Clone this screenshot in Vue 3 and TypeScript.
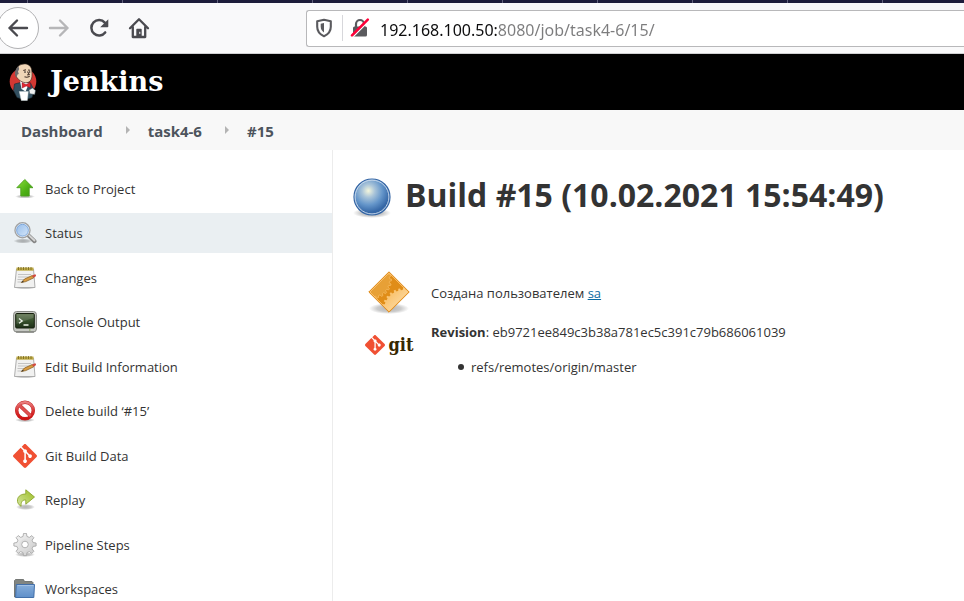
<script setup lang="ts">
import { ref } from 'vue'

type IconName = 'up' | 'search' | 'notepad' | 'terminal' | 'stop' | 'git' | 'redo' | 'gear' | 'folder'

interface Task {
  label: string
  icon: IconName
  active?: boolean
}

const address = ref('192.168.100.50:8080/job/task4-6/15/')

const crumbs: string[] = ['Dashboard', 'task4-6', '#15']

const tasks: Task[] = [
  { label: 'Back to Project', icon: 'up' },
  { label: 'Status', icon: 'search', active: true },
  { label: 'Changes', icon: 'notepad' },
  { label: 'Console Output', icon: 'terminal' },
  { label: 'Edit Build Information', icon: 'notepad' },
  { label: 'Delete build ‘#15’', icon: 'stop' },
  { label: 'Git Build Data', icon: 'git' },
  { label: 'Replay', icon: 'redo' },
  { label: 'Pipeline Steps', icon: 'gear' },
  { label: 'Workspaces', icon: 'folder' },
]

/* Outline of a toothed wheel */
function gearPath(cx: number, cy: number, outer: number, inner: number, teeth: number): string {
  const step = (Math.PI * 2) / teeth
  const points: string[] = []
  for (let i = 0; i < teeth; i++) {
    const a = i * step - Math.PI / 2
    const corners: [number, number][] = [
      [-0.3, inner],
      [-0.17, outer],
      [0.17, outer],
      [0.3, inner],
    ]
    for (const [offset, r] of corners) {
      const t = a + offset * step
      points.push(`${(cx + r * Math.cos(t)).toFixed(2)} ${(cy + r * Math.sin(t)).toFixed(2)}`)
    }
  }
  return `M${points.join('L')}Z`
}

const wheel = gearPath(12, 11.5, 11.2, 8.3, 8)
const smallWheel = gearPath(6, 10, 18.5, 16.5, 24)
const largeWheel = gearPath(37, 40, 22, 20, 28)

const gitMark =
  'M23.546 10.93L13.067.452c-.604-.603-1.582-.603-2.188 0L8.708 2.627l2.76 2.76c.645-.215 1.379-.07 1.889.441.516.515.658 1.258.438 1.9l2.658 2.66c.645-.223 1.387-.078 1.9.435.721.72.721 1.884 0 2.604-.719.719-1.881.719-2.6 0-.539-.541-.674-1.337-.404-1.996L12.86 8.955v6.525c.176.086.342.203.488.348.713.721.713 1.883 0 2.6-.719.721-1.889.721-2.609 0-.719-.719-.719-1.879 0-2.598.182-.18.387-.316.605-.406V8.835c-.217-.091-.424-.222-.6-.401-.545-.545-.676-1.342-.396-2.009L7.636 3.7.45 10.881c-.6.605-.6 1.584 0 2.189l10.48 10.477c.604.604 1.582.604 2.186 0l10.43-10.43c.605-.603.605-1.582 0-2.187'
</script>

<template>
  <div class="window">
    <div class="tabstrip"></div>

    <div class="toolbar">
      <div class="nav">
        <button class="nav-button back" type="button" aria-label="Back">
          <svg width="22" height="20" viewBox="0 0 22 20" fill="none" stroke="#4a4a4f" stroke-width="2.4" stroke-linecap="round" stroke-linejoin="round">
            <path d="M20 10H2.5M10 2.5L2.5 10l7.5 7.5" />
          </svg>
        </button>
        <button class="nav-button" type="button" aria-label="Forward" disabled>
          <svg width="22" height="20" viewBox="0 0 22 20" fill="none" stroke="#b6b6b8" stroke-width="2.4" stroke-linecap="round" stroke-linejoin="round">
            <path d="M2 10h17.5M12 2.5l7.500 7.500-7.500 7.500" />
          </svg>
        </button>
        <button class="nav-button" type="button" aria-label="Reload">
          <svg width="20" height="20" viewBox="0 0 20 20" fill="none">
            <path d="M15.800 4.600A7.700 7.700 0 1 0 16.200 14.400" stroke="#4a4a4f" stroke-width="2.500" stroke-linecap="round" />
            <path d="M19.300 1.200v7.300a.8.8 0 0 1-.8.8h-7.300z" fill="#4a4a4f" />
          </svg>
        </button>
        <button class="nav-button" type="button" aria-label="Home">
          <svg width="22" height="22" viewBox="0 0 22 22" fill="none" stroke="#4a4a4f" stroke-width="2.300" stroke-linecap="round" stroke-linejoin="round">
            <path d="M2 11.300L11 2.200l9 9.100M4.800 10v10h12.400V10" />
            <path d="M9 19.500v-7h4v7" fill="#4a4a4f" stroke-width="1.400" />
            <path d="M11.800 15.200v1.300" stroke="#f9f9fa" stroke-width="1" />
          </svg>
        </button>
      </div>

      <div class="urlbar">
        <svg class="shield" width="18" height="20" viewBox="0 0 18 20" fill="none">
          <path d="M9 1.700l6.800 1.500v5.600c0 4.300-2.600 7.600-6.800 9.400-4.200-1.800-6.800-5.100-6.800-9.400V3.200z" stroke="#5a5a5e" stroke-width="2.100" stroke-linejoin="round" />
          <path d="M9 5.100v9.400c-2.100-1.300-3.300-3.200-3.300-5.700V5.700z" fill="#5a5a5e" />
        </svg>
        <span class="divider"></span>
        <svg width="20" height="20" viewBox="0 0 20 20" fill="none">
          <path d="M6 9V6a4 4 0 0 1 8 0v3" stroke="#5a5a5e" stroke-width="2.200" />
          <rect x="3" y="8.500" width="14" height="10" rx="1.500" fill="#5a5a5e" />
          <path d="M3.300 18.500L18.800 3" stroke="#fff" stroke-width="1.400" />
          <path d="M2 17.400L17.800 1.600" stroke="#ff0039" stroke-width="2.500" stroke-linecap="round" />
        </svg>
        <input v-model="address" class="address" type="text" aria-label="Address" spellcheck="false" />
      </div>
    </div>

    <header class="header">
      <a class="brand" href="#">
        <svg width="28" height="38" viewBox="0 0 28 38">
          <defs>
            <linearGradient id="greenUp" x1="0" y1="0" x2="1" y2="1">
              <stop offset="0" stop-color="#8be03a" />
              <stop offset=".6" stop-color="#4eb016" />
              <stop offset="1" stop-color="#3c9a0c" />
            </linearGradient>
            <linearGradient id="lens" x1="0" y1="0" x2="1" y2="1">
              <stop offset="0" stop-color="#8fb8e8" />
              <stop offset="1" stop-color="#dcebfb" />
            </linearGradient>
            <linearGradient id="screen" x1="0" y1="0" x2="0" y2="1">
              <stop offset="0" stop-color="#60744f" />
              <stop offset=".5" stop-color="#36502b" />
              <stop offset="1" stop-color="#1d2f17" />
            </linearGradient>
            <linearGradient id="redRing" x1="0" y1="0" x2="0" y2="1">
              <stop offset="0" stop-color="#e98080" />
              <stop offset=".5" stop-color="#d93636" />
              <stop offset="1" stop-color="#cc1010" />
            </linearGradient>
            <linearGradient id="lime" x1="0" y1="1" x2="1" y2="0">
              <stop offset="0" stop-color="#d5e6a0" />
              <stop offset="1" stop-color="#9bbd22" />
            </linearGradient>
            <linearGradient id="steel" x1="0" y1="0" x2="1" y2="1">
              <stop offset="0" stop-color="#f6f6f6" />
              <stop offset="1" stop-color="#c9c9c9" />
            </linearGradient>
            <linearGradient id="blueFolder" x1="0" y1="0" x2="0" y2="1">
              <stop offset="0" stop-color="#86aedb" />
              <stop offset="1" stop-color="#5f8fc9" />
            </linearGradient>
            <linearGradient id="amber" x1="0" y1="0" x2="1" y2="1">
              <stop offset=".1" stop-color="#f9bd62" />
              <stop offset=".5" stop-color="#fcdfae" />
            </linearGradient>
            <radialGradient id="ball" cx=".4" cy=".33" r=".6">
              <stop offset="0" stop-color="#f4f6dc" />
              <stop offset=".3" stop-color="#a9c4d9" />
              <stop offset=".65" stop-color="#6596ca" />
              <stop offset="1" stop-color="#3567a6" />
            </radialGradient>
            <radialGradient id="shadow">
              <stop offset="0" stop-color="#000" stop-opacity=".3" />
              <stop offset=".6" stop-color="#000" stop-opacity=".2" />
              <stop offset="1" stop-color="#000" stop-opacity="0" />
            </radialGradient>
          </defs>
          <circle cx="14" cy="18.500" r="13.300" fill="#d33833" />
          <path d="M5.500 21l6-1.500 10 .5 3.500 7-2 7.500-7 2.500-8-2.500-3.500-7z" fill="#335061" stroke="#1b2a33" stroke-width=".6" />
          <path d="M11 18l1.500 8 4 2.500 3.500-8z" fill="#fff" />
          <path d="M7.500 14C5.800 9.500 7 3.500 12 1.600c5.500-2 10 .5 10.700 5.400.2 2.500.5 4 .2 6.500-.3 4-3 6.500-6.400 6.200-3.500-.2-6.500-2.200-9-5.700z" fill="#f0d6b7" stroke="#3a2d25" stroke-width=".6" />
          <path d="M7.500 14.500C5 12 5.500 6 9.500 3.500L10.200 6 9 8.500l.8 2.500-1.300.5z" fill="#6d6b6d" />
          <path d="M14.300 7.500l2.700-.8M19 7l2.200.2M18.500 8.500l1.700 3-2 .4M15.500 13.800c2 .8 3.500.4 5.200-.6" fill="none" stroke="#49362c" stroke-width="1.100" />
          <circle cx="16" cy="9.100" r=".8" fill="#231f20" />
          <circle cx="20.600" cy="9" r=".8" fill="#231f20" />
          <path d="M13 19.500l4 2 4.200-2 .3 5.200-4.300-1.700-4 2z" fill="#e0262e" stroke="#81001f" stroke-width=".4" />
          <path d="M20 27l3.500-2 3 2.500-.8 4-5-.8z" fill="#eef0f0" stroke="#40535c" stroke-width=".5" />
          <path d="M10.300 28.500h9l-1 9h-6z" fill="#fff" stroke="#cad6d9" stroke-width=".5" />
        </svg>
        <span>Jenkins</span>
      </a>
    </header>

    <nav class="crumbs" aria-label="Breadcrumb">
      <template v-for="(crumb, i) in crumbs" :key="crumb">
        <svg v-if="i > 0" class="chevron" width="6" height="8" viewBox="0 0 6 8"><path d="M1 0l4 4-4 4z" fill="#b4b4b4" /></svg>
        <a href="#">{{ crumb }}</a>
      </template>
    </nav>

    <div class="page">
      <aside class="side">
        <ul class="tasks">
          <li v-for="task in tasks" :key="task.label">
            <a class="task" :class="{ active: task.active }" href="#">
              <svg width="24" height="24" viewBox="0 0 24 24">
                <g v-if="task.icon === 'up'">
                  <ellipse cx="12" cy="19.500" rx="10" ry="2" fill="url(#shadow)" />
                  <path d="M11.800 2.500l8.200 8.200h-3.800v8.300H7.800v-8.300H3.800z" fill="url(#greenUp)" stroke="#4b9f1d" stroke-width=".9" stroke-linejoin="round" />
                </g>
                <g v-else-if="task.icon === 'search'">
                  <ellipse cx="10" cy="20" rx="9.500" ry="2.500" fill="url(#shadow)" />
                  <path d="M15 14l6.500 6.200" stroke="#858585" stroke-width="4" stroke-linecap="round" />
                  <path d="M15.500 13.800l6 5.700" stroke="#d5d5d5" stroke-width="1.800" stroke-linecap="round" />
                  <circle cx="9.500" cy="9.200" r="7.400" fill="url(#lens)" stroke="#a2a2a2" stroke-width="1.600" />
                  <circle cx="9.500" cy="9.200" r="6.400" fill="none" stroke="#fff" stroke-width=".8" />
                  <circle cx="9.500" cy="9.200" r="5.900" fill="none" stroke="#6d9bd3" stroke-width=".8" />
                </g>
                <g v-else-if="task.icon === 'notepad'">
                  <ellipse cx="12" cy="21.500" rx="11" ry="2" fill="url(#shadow)" />
                  <path d="M3.500 3h17l1.500 18.500H1.500z" fill="#f1f1f0" stroke="#a5a5a5" stroke-width=".9" />
                  <path d="M3.500 1.500h17v3.200h-17z" fill="#c0ac45" />
                  <path d="M5.500 1v3M8 1v3M10.500 1v3M13 1v3M15.500 1v3M18 1v3" stroke="#756522" stroke-width=".8" />
                  <path d="M5 8.500h13M5 11h12M4.500 13.500h10M4.500 16h6" stroke="#c3c3c3" stroke-width="1" />
                  <path d="M8.300 16.500l3.200-3.500 7.800-3.500 1.500 2.300-8 3.800z" fill="#d99c42" stroke="#805614" stroke-width=".7" />
                  <path d="M8.300 16.500l1.500-1.700 1 1.200z" fill="#333" />
                  <path d="M19 9.600l2.600-1.200c1.300-.4 2 1.600.9 2.200l-2 1.200z" fill="#d34b42" />
                </g>
                <g v-else-if="task.icon === 'terminal'">
                  <rect x=".600" y="1.500" width="22.800" height="20.500" rx="3" fill="#c6c8c3" stroke="#878984" stroke-width="1" />
                  <path d="M3 22h18" stroke="#777974" stroke-width="1.200" />
                  <rect x="2.700" y="3.500" width="18.600" height="14.500" rx="1" fill="url(#screen)" stroke="#17200f" stroke-width="1" />
                  <path d="M3.500 4.300h17v3.500L3.500 14z" fill="#fff" opacity=".13" />
                  <path d="M6 8.500l3.200 2.400L6 13.300M10.500 15h5" fill="none" stroke="#edf3e8" stroke-width="1.300" />
                  <path d="M16 20h1.500" stroke="#79a33c" stroke-width="1.200" />
                </g>
                <g v-else-if="task.icon === 'stop'">
                  <ellipse cx="12" cy="21" rx="10" ry="2.200" fill="url(#shadow)" />
                  <circle cx="12" cy="11.500" r="8.300" fill="#fff" stroke="#c22525" stroke-width="3.400" />
                  <path d="M6.200 6l11.500 11" stroke="#c22525" stroke-width="3.600" />
                  <circle cx="12" cy="11.500" r="8.300" fill="none" stroke="url(#redRing)" stroke-width="2.600" />
                  <path d="M6.200 6l11.500 11" stroke="#de5050" stroke-width="2.600" />
                </g>
                <path v-else-if="task.icon === 'git'" :d="gitMark" fill="#f05033" />
                <g v-else-if="task.icon === 'redo'">
                  <ellipse cx="12.500" cy="19" rx="9.500" ry="3" fill="url(#shadow)" />
                  <path d="M12.800 1.800l8.700 7.200-8.700 7.200v-4.200c-3.500-.2-5 2-4.700 6.300-3-1.800-3.900-4.300-3.600-6.500.5-4 4-5.800 8.300-5.800z" fill="url(#lime)" stroke="#8ca52d" stroke-width=".9" stroke-linejoin="round" />
                </g>
                <g v-else-if="task.icon === 'gear'">
                  <ellipse cx="12" cy="21.500" rx="10" ry="2.500" fill="url(#shadow)" />
                  <path :d="wheel" fill="url(#steel)" stroke="#a9a9a9" stroke-width=".9" stroke-linejoin="round" />
                  <circle cx="12" cy="11.500" r="5.400" fill="#dedede" opacity=".7" />
                  <circle cx="12" cy="11.500" r="3.300" fill="#fff" stroke="#aaa" stroke-width=".9" />
                </g>
                <g v-else>
                  <path d="M1.500 20V3.500l1-1h8l1 2h7.500l1 1V20z" fill="#818581" stroke="#626562" stroke-width=".8" />
                  <path d="M3.300 7.500h18.200L20.800 20.500H2.600z" fill="url(#blueFolder)" stroke="#426fa9" stroke-width="1" stroke-linejoin="round" />
                  <path d="M4.500 8.500h16" stroke="#a9c5e6" stroke-width=".8" />
                </g>
              </svg>
              <span>{{ task.label }}</span>
            </a>
          </li>
        </ul>
      </aside>

      <main class="main">
        <h1 class="title">
          <svg width="40" height="44" viewBox="0 0 40 44">
            <ellipse cx="20" cy="37" rx="19" ry="5" fill="url(#shadow)" />
            <circle cx="20" cy="21" r="18" fill="url(#ball)" stroke="#3465a4" stroke-width="1.200" />
            <circle cx="20" cy="21" r="16.900" fill="none" stroke="#d3e0ef" stroke-width=".9" />
          </svg>
          <span>Build #15 (10.02.2021 15:54:49)</span>
        </h1>

        <div class="summary">
          <div class="summary-icon">
            <svg width="44" height="44" viewBox="0 0 44 44">
              <defs>
                <clipPath id="diamond"><path d="M22 2L42 22 22 42 2 22z" /></clipPath>
              </defs>
              <ellipse cx="22" cy="38.500" rx="20" ry="5.500" fill="url(#shadow)" />
              <path d="M22 2L42 22 22 42 2 22z" fill="#e08d18" />
              <g clip-path="url(#diamond)">
                <path :d="smallWheel" fill="#e7a036" stroke="#f4b658" stroke-width=".9" />
                <path :d="largeWheel" fill="url(#amber)" />
              </g>
              <path d="M22 3L41 22 22 41 3 22z" fill="none" stroke="#fcc577" stroke-width=".8" />
              <path d="M22 1.800L42.200 22 22 42.200 1.800 22z" fill="none" stroke="#e08a18" stroke-width="1" stroke-linejoin="round" />
            </svg>
          </div>
          <p class="cause">Создана пользователем <a href="#">sa</a></p>

          <div class="summary-icon git">
            <svg width="20" height="20" viewBox="0 0 24 24"><path :d="gitMark" fill="#f05033" /></svg>
            <span>git</span>
          </div>
          <div class="revision">
            <p><b>Revision</b>: eb9721ee849c3b38a781ec5c391c79b686061039</p>
            <ul>
              <li>refs/remotes/origin/master</li>
            </ul>
          </div>
        </div>
      </main>
    </div>
  </div>
</template>

<style>
body {
  margin: 0;
  background: #fff;
}
</style>

<style scoped>
.window {
  display: flex;
  flex-direction: column;
  height: 100vh;
  overflow: hidden;
  color: #333;
  font: 13px/20px 'Open Sans', 'Noto Sans', sans-serif;
}

.tabstrip {
  flex: none;
  height: 3px;
  background: repeating-linear-gradient(to right, #1d1d3b 0 27px, #62627c 27px 28px, #1d1d3b 28px 95px);
}

.toolbar {
  flex: none;
  display: flex;
  align-items: center;
  height: 50px;
  background: #f9f9fa;
  border-bottom: 1px solid #d0d0d2;
}

.nav {
  flex: none;
  display: flex;
  align-items: center;
  width: 306px;
}

.nav-button {
  display: grid;
  place-items: center;
  flex: none;
  width: 40px;
  height: 40px;
  padding: 0;
  border: 0;
  background: none;
}

.nav-button.back {
  width: 42px;
  height: 42px;
  margin-left: -3px;
  border: 1px solid #b1b1b3;
  border-radius: 50%;
  background: #fff;
}

.urlbar {
  flex: 1;
  display: flex;
  align-items: center;
  box-sizing: border-box;
  height: 37px;
  padding-left: 8px;
  background: #fff;
  border: 1px solid #b8b8ba;
  border-right: 0;
  border-radius: 3px 0 0 3px;
}

.divider {
  width: 1px;
  height: 26px;
  margin: 0 7px 0 9px;
  background: #d7d7db;
}

.address {
  flex: 1;
  min-width: 0;
  height: 32px;
  margin-left: 10px;
  padding: 3px 0 0;
  border: 0;
  outline: 0;
  color: transparent;
  background: linear-gradient(to right, #0c0c0d 117px, #7c7c7d 117px);
  background-clip: text;
  font: 16px/28px 'Noto Sans', 'Open Sans', sans-serif;
}

.header {
  flex: none;
  display: flex;
  align-items: center;
  height: 56px;
  padding-left: 9px;
  background: #000;
}

.brand {
  display: flex;
  align-items: center;
  gap: 13px;
  color: #fff;
  font: bold 27px/32px 'DejaVu Serif', serif;
  text-decoration: none;
}

.crumbs {
  flex: none;
  display: flex;
  align-items: center;
  height: 40px;
  padding-left: 21px;
  background: #f8f8f8;
}

.crumbs a {
  padding-top: 2px;
  color: #4d545d;
  font-size: 15px;
  font-weight: 700;
  text-decoration: none;
}

.chevron {
  margin: 0 17px 0 22px;
}

.page {
  flex: 1;
  min-height: 0;
  display: flex;
}

.side {
  flex: none;
  width: 332px;
  padding-top: 19px;
  border-right: 1px solid #ececec;
}

.tasks {
  margin: 0;
  padding: 0;
  list-style: none;
}

.tasks li {
  margin-bottom: 4px;
}

.tasks li:nth-child(even) {
  margin-bottom: 5px;
}

.task {
  display: flex;
  align-items: center;
  gap: 8px;
  height: 40px;
  padding-left: 13px;
  color: #333;
  text-decoration: none;
}

.task.active {
  background: #eaeff2;
}

.main {
  flex: 1;
  min-width: 0;
  padding: 24px 19px;
}

.title {
  display: flex;
  align-items: flex-end;
  gap: 13px;
  height: 46px;
  margin: 0;
  font-size: 32px;
  line-height: 50px;
  white-space: nowrap;
}

.title svg {
  flex: none;
}

.summary {
  display: grid;
  grid-template-columns: 48px 1fr;
  column-gap: 18px;
  margin: 50px 0 0 13px;
}

.summary-icon {
  display: flex;
  justify-content: center;
  height: 52px;
}

.summary p {
  margin: 0;
}

.summary .cause {
  padding-top: 13px;
}

.cause a {
  color: #0b6aa2;
}

.summary-icon.git {
  align-items: center;
  gap: 4px;
  height: 45px;
  color: #362701;
  font: bold 18px/20px 'DejaVu Serif Condensed', 'DejaVu Serif', serif;
}

.git svg {
  flex: none;
}

.revision ul {
  margin: 15px 0 0;
  padding-left: 27px;
  list-style: none;
}

.revision li {
  display: flex;
  align-items: center;
  gap: 7px;
}

.revision li::before {
  content: '';
  width: 6px;
  height: 6px;
  border-radius: 50%;
  background: #333;
}
</style>
